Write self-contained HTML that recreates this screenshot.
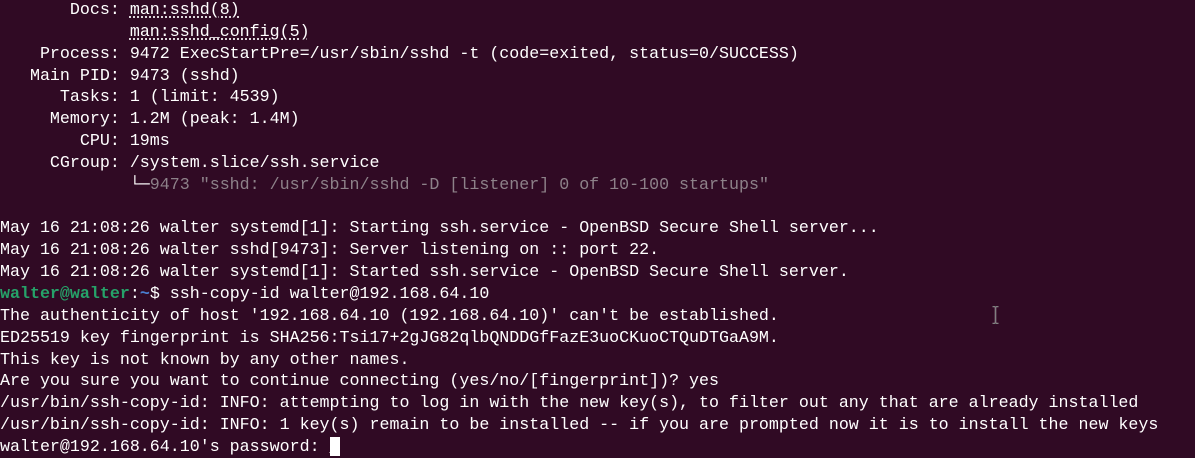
<!DOCTYPE html>
<html><head><meta charset="utf-8"><style>
html,body{margin:0;padding:0;background:#300a24;width:1195px;height:446px;overflow:hidden}
pre{margin:0;position:absolute;left:0;top:-1px;font-family:"Liberation Mono","DejaVu Sans Mono",monospace;font-size:16.65px;line-height:21.85px;color:#ffffff;white-space:pre}
.u{text-decoration:underline dotted;text-underline-offset:3px}
.d{color:#8d8189}
.g{color:#26a269;font-weight:bold}
.b{color:#4a7fd0;font-weight:bold}
.cur{background:#fff;color:#fff}
.ib{position:absolute;left:992px;top:306px;width:7px;height:18px}
</style></head><body>
<pre>       Docs: <span class="u">man:sshd(8)</span>
             <span class="u">man:sshd_config(5)</span>
    Process: 9472 ExecStartPre=/usr/sbin/sshd -t (code=exited, status=0/SUCCESS)
   Main PID: 9473 (sshd)
      Tasks: 1 (limit: 4539)
     Memory: 1.2M (peak: 1.4M)
        CPU: 19ms
     CGroup: /system.slice/ssh.service
             └─<span class="d">9473 "sshd: /usr/sbin/sshd -D [listener] 0 of 10-100 startups"</span>

May 16 21:08:26 walter systemd[1]: Starting ssh.service - OpenBSD Secure Shell server...
May 16 21:08:26 walter sshd[9473]: Server listening on :: port 22.
May 16 21:08:26 walter systemd[1]: Started ssh.service - OpenBSD Secure Shell server.
<span class="g">walter@walter</span>:<span class="b">~</span>$ ssh-copy-id walter@192.168.64.10
The authenticity of host '192.168.64.10 (192.168.64.10)' can't be established.
ED25519 key fingerprint is SHA256:Tsi17+2gJG82qlbQNDDGfFazE3uoCKuoCTQuDTGaA9M.
This key is not known by any other names.
Are you sure you want to continue connecting (yes/no/[fingerprint])? yes
/usr/bin/ssh-copy-id: INFO: attempting to log in with the new key(s), to filter out any that are already installed
/usr/bin/ssh-copy-id: INFO: 1 key(s) remain to be installed -- if you are prompted now it is to install the new keys
walter@192.168.64.10's password: <span class="cur">_</span></pre>
<svg class="ib" viewBox="0 0 7 18"><path d="M0.5 0.5h6M0.5 17.5h6M3.5 0.5v17" stroke="#fff" stroke-width="1.3" fill="none"/><path d="M0.5 0.5h6M0.5 17.5h6M3.5 0.5v17" stroke="#000" stroke-width="0.5" fill="none"/></svg>
</body></html>
